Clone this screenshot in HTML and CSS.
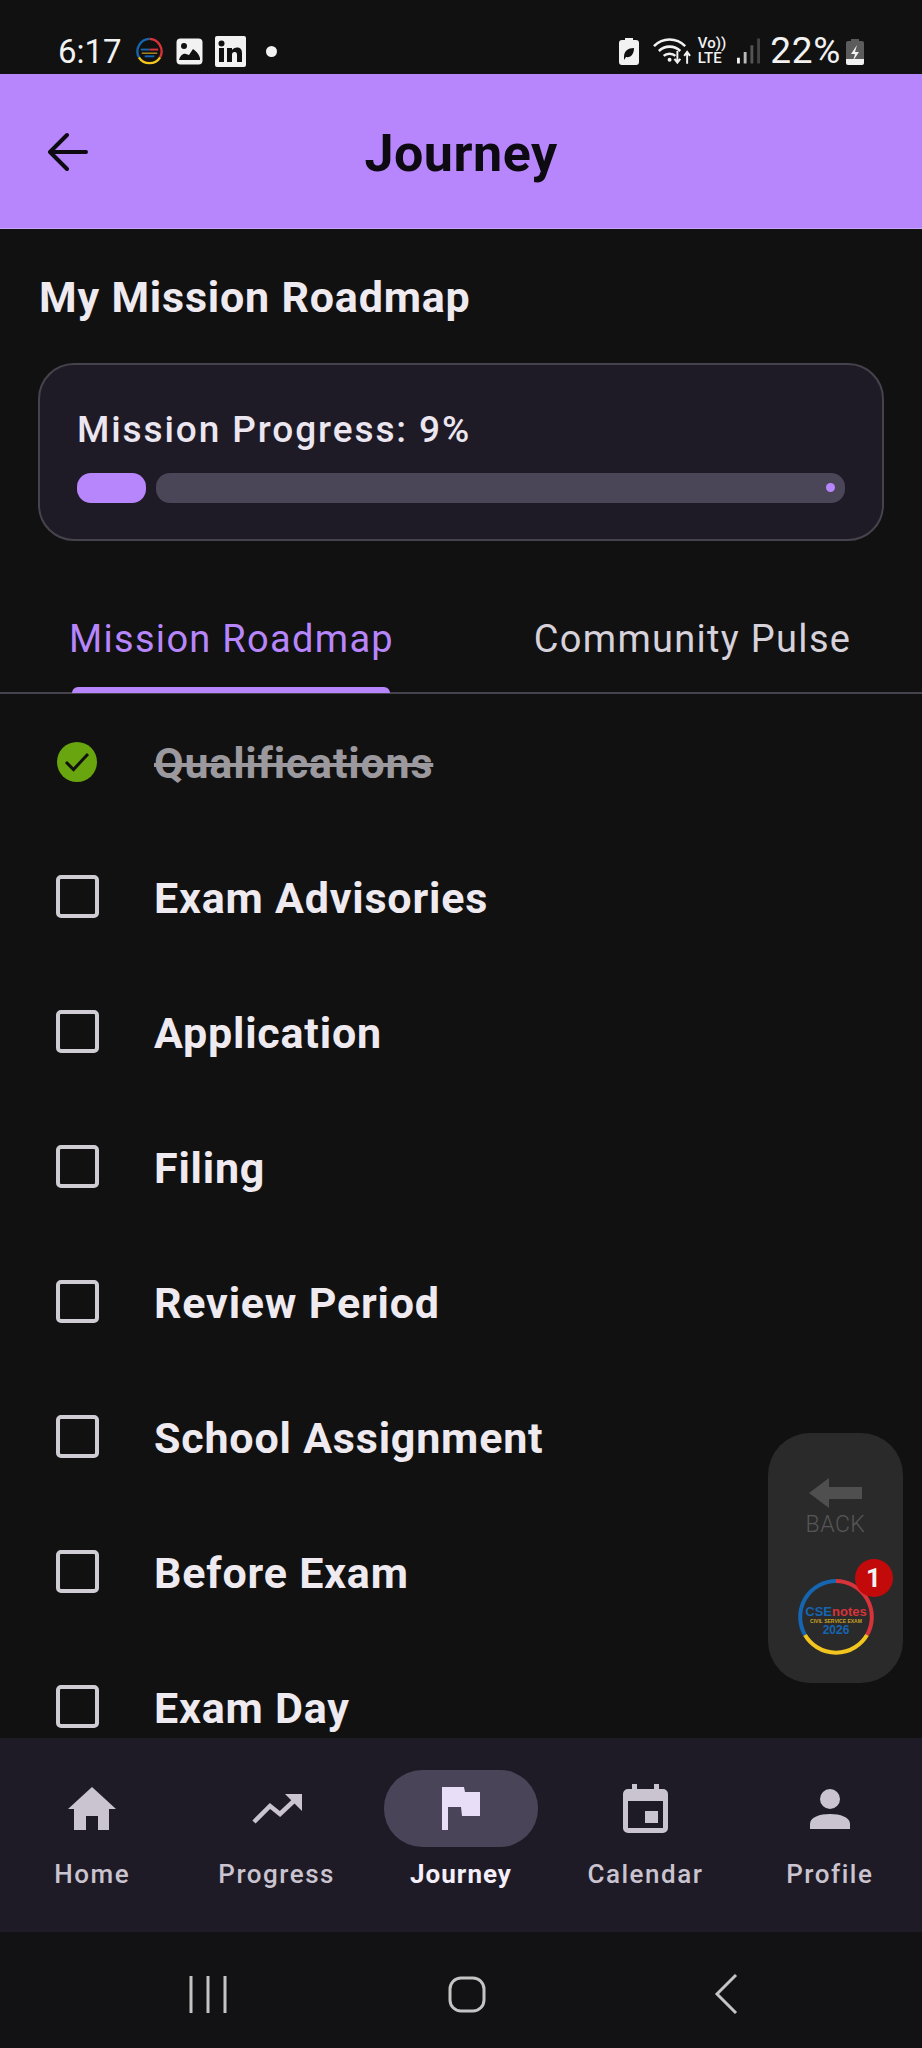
FILE: index.html
```html
<!DOCTYPE html>
<html lang="en">
<head>
  <meta charset="UTF-8">
  <title>Journey</title>
  <link rel="stylesheet" href="styles.css">
</head>
<body>
  <div class="phone">

    <div class="status-bar">
      <div class="status-left">
        <span class="clock">6:17</span>
        <svg width="29" height="29" viewBox="0 0 30 30">
          <path d="M15 2A13 13 0 0 0 4 21" fill="none" stroke="#1565b0" stroke-width="2.4"/>
          <path d="M15 2A13 13 0 0 1 26 21" fill="none" stroke="#d8333a" stroke-width="2.4"/>
          <path d="M4 21A13 13 0 0 0 26 21" fill="none" stroke="#f2c51f" stroke-width="2.4"/>
          <rect x="6" y="12" width="9" height="2" fill="#1565b0"/>
          <rect x="15" y="12" width="9" height="2" fill="#d8333a"/>
          <rect x="7" y="16" width="16" height="1.5" fill="#b08a20"/>
          <rect x="10" y="19" width="10" height="2" fill="#1565b0"/>
        </svg>
        <svg width="27" height="27" viewBox="0 0 27 27">
          <rect width="26" height="26" x="0.5" y="0.5" rx="4" fill="#f2f2f2"/>
          <circle cx="8" cy="8" r="3" fill="#111"/>
          <path d="M3 22c1-4 4-7 7-6l3 1 4-6c3 2 6 5 7 9v2z" fill="#111"/>
        </svg>
        <svg width="31" height="31" viewBox="0 0 31 31">
          <rect width="31" height="31" rx="2" fill="#f2f2f2"/>
          <rect x="4" y="12" width="5" height="14" fill="#111"/>
          <circle cx="6.5" cy="7.5" r="3" fill="#111"/>
          <path d="M12 12h5v2c1-1.500 3-2.500 5-2.500 4 0 5 2.500 5 6V26h-5v-7c0-2-.5-3-2.300-3-2 0-2.700 1.300-2.700 3v7h-5z" fill="#111"/>
        </svg>
        <span class="st-dot"></span>
      </div>
      <div class="status-right">
        <svg width="20" height="27" viewBox="0 0 20 27">
          <path d="M6 0h8v2h3a3 3 0 0 1 3 3v19a3 3 0 0 1-3 3H3a3 3 0 0 1-3-3V5a3 3 0 0 1 3-3h3z" fill="#f2f2f2"/>
          <path d="M5 19c0-6 4-9 10-9 0 6-3 10-8 9l-2 3" fill="#111"/>
        </svg>
        <svg class="st-wifi" width="39" height="28" viewBox="0 0 40 28">
          <path d="M1 9c9-9 23-9 32 0M6 14c6-6 16-6 22 0M11 19c3-3 9-3 12 0" fill="none" stroke="#f2f2f2" stroke-width="2.600"/>
          <circle cx="17" cy="23" r="2" fill="#f2f2f2"/>
          <path d="M25 14v11M22 22l3 4 3-4M35 27V16M32 19l3-4 3 4" fill="none" stroke="#f2f2f2" stroke-width="2"/>
        </svg>
        <span class="st-volte">Vo))<br>LTE</span>
        <svg class="st-signal" width="23" height="27" viewBox="0 0 24 27">
          <rect x="0" y="20" width="3" height="6" fill="#f2f2f2"/>
          <rect x="7" y="14" width="3" height="12" fill="#bbb"/>
          <rect x="14" y="7" width="3" height="19" fill="#555"/>
          <rect x="21" y="0" width="3" height="26" fill="#444"/>
        </svg>
        <span class="battery-text">22%</span>
        <svg width="18" height="27" viewBox="0 0 18 27">
          <path d="M5 1h8v2h3a2 2 0 0 1 2 2v16H0V5a2 2 0 0 1 2-2h3z" fill="#5c5c5c"/>
          <path d="M0 21h18v4a2 2 0 0 1-2 2H2a2 2 0 0 1-2-2z" fill="#f2f2f2"/>
          <path d="M11 7l-6 9h4l-2 7 6-9H9z" fill="#f2f2f2"/>
        </svg>
      </div>
    </div>

    <header class="app-bar">
      <svg class="app-bar-back" width="40" height="40" viewBox="0 0 40 40">
        <path d="M38 20H3M19 3L2 20l17 17" fill="none" stroke="#0d0a12" stroke-width="4" stroke-linecap="round" stroke-linejoin="round"/>
      </svg>
      <h1>Journey</h1>
    </header>

    <main class="content">
      <h2 class="page-title">My Mission Roadmap</h2>

      <section class="progress-card">
        <div class="progress-label">Mission Progress: 9%</div>
        <div class="progress-row">
          <div class="progress-fill"></div>
          <div class="progress-track"><span class="progress-stop"></span></div>
        </div>
      </section>

      <div class="tabs">
        <div class="tab tab-active">Mission Roadmap<span class="tab-line"></span></div>
        <div class="tab">Community Pulse</div>
      </div>

      <ul class="task-list">
        <li class="task task-done">
          <svg class="task-check" width="40" height="40" viewBox="0 0 40 40">
            <circle cx="20" cy="20" r="20" fill="#69a50e"/>
            <path d="M9 20l7.500 7.500L31 12" fill="none" stroke="#111" stroke-width="3"/>
          </svg>
          <span class="task-name">Qualifications</span>
        </li>
        <li class="task"><span class="checkbox"></span><span class="task-name">Exam Advisories</span></li>
        <li class="task"><span class="checkbox"></span><span class="task-name">Application</span></li>
        <li class="task"><span class="checkbox"></span><span class="task-name">Filing</span></li>
        <li class="task"><span class="checkbox"></span><span class="task-name">Review Period</span></li>
        <li class="task"><span class="checkbox"></span><span class="task-name">School Assignment</span></li>
        <li class="task"><span class="checkbox"></span><span class="task-name">Before Exam</span></li>
        <li class="task"><span class="checkbox"></span><span class="task-name">Exam Day</span></li>
      </ul>
    </main>

    <aside class="float-widget">
      <svg width="54" height="32" viewBox="0 0 54 32">
        <path d="M0 16L20 1v9h33v12H20v9z" fill="#4f4f4f"/>
      </svg>
      <div class="float-back">BACK</div>
      <div class="float-logo">
        <svg width="78" height="78" viewBox="0 0 78 78">
          <path d="M39 3A36 36 0 0 0 8 57" fill="none" stroke="#1565b0" stroke-width="4"/>
          <path d="M39 3A36 36 0 0 1 70 57" fill="none" stroke="#d8333a" stroke-width="4"/>
          <path d="M8 57A36 36 0 0 0 70 57" fill="none" stroke="#f2c51f" stroke-width="4"/>
          <text x="39" y="38" text-anchor="middle" class="logo-name"><tspan fill="#1565b0">CSE</tspan><tspan fill="#d8333a">notes</tspan></text>
          <text x="39" y="45" text-anchor="middle" class="logo-sub">CIVIL SERVICE EXAM</text>
          <text x="39" y="56" text-anchor="middle" class="logo-year">2026</text>
        </svg>
        <span class="float-badge">1</span>
      </div>
    </aside>

    <nav class="bottom-nav">
      <div class="nav-item">
        <span class="nav-icon">
          <svg width="48" height="43" viewBox="0 0 48 43"><path d="M24 0L48 22h-7v21H30V29H18v14H6V22H0z" fill="#cac4d0"/></svg>
        </span>
        <span class="nav-label">Home</span>
      </div>
      <div class="nav-item">
        <span class="nav-icon">
          <svg width="50" height="30" viewBox="0 0 50 30"><path d="M2 28l16-16 10 8L45 4" fill="none" stroke="#cac4d0" stroke-width="4.500"/><path d="M33 0h17v17z" fill="#cac4d0"/></svg>
        </span>
        <span class="nav-label">Progress</span>
      </div>
      <div class="nav-item nav-item-active">
        <span class="nav-icon nav-pill">
          <svg width="38" height="43" viewBox="0 0 38 43"><path d="M0 0h22l1 5h15v24H20l-1-9H6v23H0z" fill="#e8def8"/></svg>
        </span>
        <span class="nav-label">Journey</span>
      </div>
      <div class="nav-item">
        <span class="nav-icon">
          <svg width="45" height="49" viewBox="0 0 45 49"><path d="M5 5h4V0h5v5h17V0h5v5h4a5 5 0 0 1 5 5v34a5 5 0 0 1-5 5H5a5 5 0 0 1-5-5V10a5 5 0 0 1 5-5zm0 12v27h35V17z" fill="#cac4d0" fill-rule="evenodd"/><rect x="22" y="27" width="13" height="12" fill="#cac4d0"/></svg>
        </span>
        <span class="nav-label">Calendar</span>
      </div>
      <div class="nav-item">
        <span class="nav-icon">
          <svg width="40" height="40" viewBox="0 0 40 40"><circle cx="20" cy="10" r="10" fill="#cac4d0"/><path d="M0 40v-5c0-7 10-10 20-10s20 3 20 10v5z" fill="#cac4d0"/></svg>
        </span>
        <span class="nav-label">Profile</span>
      </div>
    </nav>

    <div class="system-nav">
      <svg width="38" height="37" viewBox="0 0 38 37"><path d="M2 0v37M19 0v37M36 0v37" stroke="#c4c4c4" stroke-width="3"/></svg>
      <svg width="38" height="37" viewBox="0 0 38 37"><rect x="2" y="2" width="34" height="33" rx="11" fill="none" stroke="#c4c4c4" stroke-width="3"/></svg>
      <svg width="24" height="40" viewBox="0 0 24 40"><path d="M22 1L3 20l19 19" fill="none" stroke="#c4c4c4" stroke-width="3"/></svg>
    </div>
  </div>
</body>
</html>
```

FILE: styles.css
```css
* {
  box-sizing: border-box;
}

body {
  margin: 0;
  background-color: #111111;
  font-family: Roboto, sans-serif;
}

.phone {
  position: relative;
  width: 922px;
  height: 2048px;
  display: flex;
  flex-direction: column;
  overflow: hidden;
}

/* status bar */
.status-bar {
  height: 74px;
  flex: none;
  display: flex;
  justify-content: space-between;
  align-items: center;
  padding: 28px 58px 0 58px;
  background-color: #111111;
}

.status-left,
.status-right {
  display: flex;
  align-items: center;
}

.status-left {
  gap: 12px;
}

.clock {
  font-size: 33px;
  color: #f2f2f2;
  margin-right: 1px;
}

.st-dot {
  width: 11px;
  height: 11px;
  margin-left: 8px;
  border-radius: 50%;
  background-color: #f2f2f2;
}

.st-wifi {
  margin-left: 14px;
}

.st-volte {
  margin-left: 6px;
  font-size: 15px;
  line-height: 15px;
  font-weight: 500;
  color: #f2f2f2;
}

.st-signal {
  margin-left: 11px;
}

.battery-text {
  margin-left: 10px;
  margin-right: 5px;
  font-size: 37px;
  line-height: 40px;
  letter-spacing: 0.7px;
  color: #f2f2f2;
}

/* app bar */
.app-bar {
  height: 155px;
  flex: none;
  position: relative;
  display: flex;
  align-items: center;
  justify-content: center;
  padding-top: 4px;
  background-color: #b886fc;
  border-bottom: 1px solid #c9a6fb;
}

.app-bar-back {
  position: absolute;
  left: 48px;
  top: 58px;
}

.app-bar h1 {
  margin: 0;
  font-size: 52px;
  font-weight: 700;
  letter-spacing: 0.5px;
  color: #0d0a12;
}

/* content */
.content {
  flex: 1;
  min-height: 0;
  overflow: hidden;
}

.page-title {
  margin: 46px 0 0 0;
  padding: 0 39px;
  height: 45px;
  font-size: 43px;
  line-height: 45px;
  font-weight: 700;
  letter-spacing: 0.8px;
  color: #eeeaf0;
}

.progress-card {
  height: 178px;
  margin: 43px 38px 0 38px;
  padding: 45px 37px 0 37px;
  background-color: #1f1b26;
  border: 2px solid #46434d;
  border-radius: 36px;
}

.progress-label {
  font-size: 37px;
  line-height: 40px;
  font-weight: 500;
  letter-spacing: 1.9px;
  color: #ebe6f0;
}

.progress-row {
  display: flex;
  gap: 10px;
  margin-top: 23px;
}

.progress-fill {
  width: 69px;
  height: 30px;
  border-radius: 14px;
  background-color: #b886fc;
}

.progress-track {
  flex: 1;
  height: 30px;
  position: relative;
  border-radius: 14px;
  background-color: #4a4657;
}

.progress-stop {
  position: absolute;
  right: 10px;
  top: 10px;
  width: 9px;
  height: 9px;
  border-radius: 50%;
  background-color: #b886fc;
}

/* tabs */
.tabs {
  display: flex;
  margin-top: 45px;
  height: 108px;
  border-bottom: 2px solid #46434d;
}

.tab {
  position: relative;
  width: 461px;
  padding: 31px 0 0 2px;
  text-align: center;
  font-size: 38px;
  line-height: 44px;
  letter-spacing: 1.3px;
  color: #d6d1da;
}

.tab-active {
  color: #b886fc;
}

.tab-line {
  position: absolute;
  left: 72px;
  bottom: -1px;
  width: 318px;
  height: 6px;
  border-radius: 6px 6px 0 0;
  background-color: #b886fc;
}

/* tasks */
.task-list {
  margin: 0;
  padding: 0;
  list-style: none;
}

.task {
  height: 135px;
  display: flex;
  align-items: center;
  padding-left: 56px;
  gap: 55px;
  font-size: 43px;
  font-weight: 700;
  letter-spacing: 0.8px;
  color: #eeeaf0;
}

.task-name {
  padding-top: 2px;
}

.task-done {
  color: #9b989e;
  text-decoration: line-through;
}

.task-check {
  flex: none;
  margin-left: 1px;
  margin-right: 2px;
}

.checkbox {
  width: 43px;
  height: 43px;
  flex: none;
  border: 4px solid #d0ccd4;
  border-radius: 5px;
}

/* floating widget */
.float-widget {
  position: absolute;
  left: 768px;
  top: 1433px;
  width: 135px;
  height: 250px;
  display: flex;
  flex-direction: column;
  align-items: center;
  padding-top: 44px;
  border-radius: 42px;
  background-color: #2a2a2a;
}

.float-back {
  margin-top: 2px;
  font-size: 23px;
  font-weight: 300;
  letter-spacing: 0.5px;
  color: #565656;
}

.float-logo {
  position: relative;
  width: 78px;
  height: 78px;
  margin-top: 40px;
}

.float-badge {
  position: absolute;
  left: 58px;
  top: -19px;
  width: 38px;
  height: 38px;
  border-radius: 50%;
  background-color: #c30a0a;
  color: #f2f2f2;
  font-size: 26px;
  font-weight: 700;
  line-height: 38px;
  text-align: center;
}

.logo-name {
  font-size: 13px;
  font-weight: 700;
  font-family: "Liberation Sans", sans-serif;
}

.logo-sub {
  font-size: 5px;
  font-weight: 700;
  fill: #c9a227;
  font-family: "Liberation Sans", sans-serif;
}

.logo-year {
  font-size: 12px;
  font-weight: 700;
  fill: #1565b0;
  font-family: "Liberation Sans", sans-serif;
}

/* bottom nav */
.bottom-nav {
  height: 194px;
  flex: none;
  display: flex;
  padding-top: 32px;
  background-color: #1e1b26;
}

.nav-item {
  flex: 1;
  display: flex;
  flex-direction: column;
  align-items: center;
  gap: 12px;
}

.nav-icon {
  width: 154px;
  height: 77px;
  display: flex;
  align-items: center;
  justify-content: center;
  border-radius: 38px;
}

.nav-pill {
  background-color: #4a4458;
}

.nav-label {
  font-size: 26px;
  line-height: 30px;
  font-weight: 500;
  letter-spacing: 1.5px;
  color: #cac4d0;
}

.nav-item-active .nav-label {
  font-weight: 700;
  letter-spacing: 1px;
  color: #f4effa;
}

/* android nav */
.system-nav {
  height: 116px;
  flex: none;
  display: grid;
  grid-template-columns: repeat(3, 259px);
  justify-items: center;
  align-items: center;
  padding: 8px 0 0 78px;
  background-color: #121215;
}
```
